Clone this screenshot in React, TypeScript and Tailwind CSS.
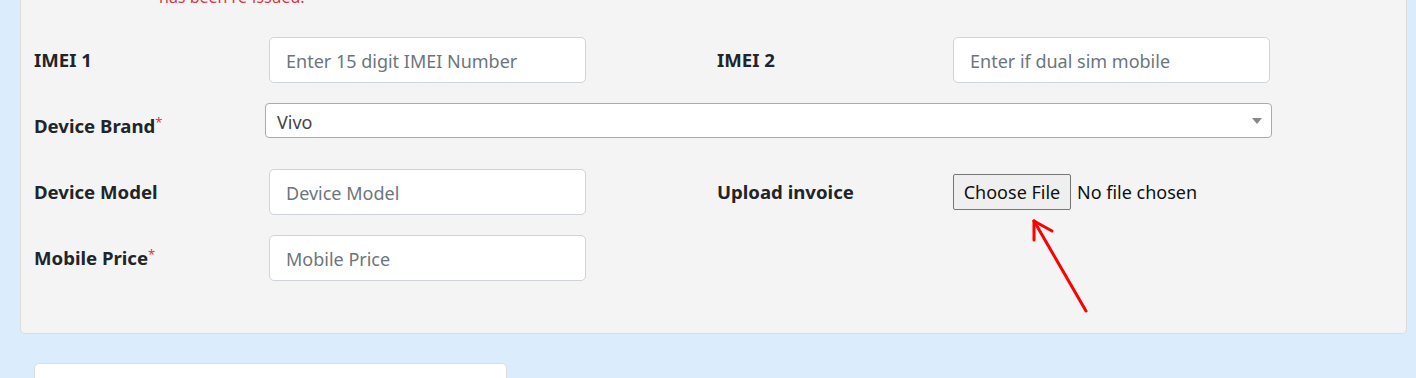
import React from "react";

const font = { fontFamily: '"Noto Sans", "Open Sans", sans-serif' };

const Label = ({ text, required }: { text: string; required?: boolean }) => (
  <div className="flex h-[46px] items-center text-[18.6px] font-bold text-[#212529]">
    <span>
      {text}
      {required && <sup className="text-[13px] font-normal text-[#dc3545]">*</sup>}
    </span>
  </div>
);

const TextBox = ({ placeholder }: { placeholder: string }) => (
  <input
    placeholder={placeholder}
    className="h-[46px] w-[317px] rounded-[5px] border border-[#ced4da] bg-white px-4 pt-[2px] text-[18px] text-[#495057] outline-none placeholder:text-[#6c757d]"
  />
);

export default function App() {
  return (
    <div className="relative h-[378px] w-[1416px] overflow-hidden bg-[#dbedfd]" style={font}>
      <div className="ml-5 mr-[9px] -mt-px rounded-b-[5px] border border-t-0 border-[#dcdcdc] bg-[#f4f4f4] pb-[52px]">
        <p className="-mt-[14px] pl-[138px] text-[16px] leading-[22px] text-[#dc3545]">has been re-issued.</p>

        <div className="mt-[29px] pl-[13px]">
          {/* row 1 */}
          <div className="flex h-[66px]">
            <div className="w-[235px]">
              <Label text="IMEI 1" />
            </div>
            <div className="w-[448px]">
              <TextBox placeholder="Enter 15 digit IMEI Number" />
            </div>
            <div className="w-[236px]">
              <Label text="IMEI 2" />
            </div>
            <TextBox placeholder="Enter if dual sim mobile" />
          </div>

          {/* row 2 */}
          <div className="flex h-[66px]">
            <div className="w-[231px]">
              <Label text="Device Brand" required />
            </div>
            <div className="flex h-[35px] w-[1007px] items-center justify-between rounded-[4px] border border-[#aaaaaa] bg-white pl-[11px] pr-[9px] pt-[3px] text-[18px] text-[#444]">
              <span>Vivo</span>
              <svg width="10" height="6" viewBox="0 0 10 6" className="-mt-[3px]">
                <path d="M0 0 L10 0 L5 6 Z" fill="#888" />
              </svg>
            </div>
          </div>

          {/* row 3 */}
          <div className="flex h-[66px]">
            <div className="w-[235px]">
              <Label text="Device Model" />
            </div>
            <div className="w-[448px]">
              <TextBox placeholder="Device Model" />
            </div>
            <div className="w-[236px]">
              <Label text="Upload invoice" />
            </div>
            <div className="flex h-[46px] items-center gap-[6px] text-[18px] text-[#101010]">
              <button className="h-[36px] w-[118px] rounded-[2px] border border-[#767676] bg-[#efefef] pt-[1px] text-[18px] text-[#101010]">
                Choose File
              </button>
              <span className="pt-[1px]">No file chosen</span>
            </div>
          </div>

          {/* row 4 */}
          <div className="flex h-[46px]">
            <div className="w-[235px]">
              <Label text="Mobile Price" required />
            </div>
            <TextBox placeholder="Mobile Price" />
          </div>
        </div>
      </div>

      <div className="ml-[34px] mt-[29px] h-[40px] w-[473px] rounded-t-[5px] border border-[#dcdcdc] bg-white" />

      {/* annotation arrow */}
      <svg className="pointer-events-none absolute left-0 top-0" width="1416" height="378">
        <g stroke="#ff0000" strokeWidth="3" strokeLinecap="round" fill="none">
          <line x1="1086" y1="311" x2="1034" y2="221" />
          <line x1="1034" y1="221" x2="1034" y2="240" />
          <line x1="1034" y1="221" x2="1052" y2="231" />
        </g>
      </svg>
    </div>
  );
}
